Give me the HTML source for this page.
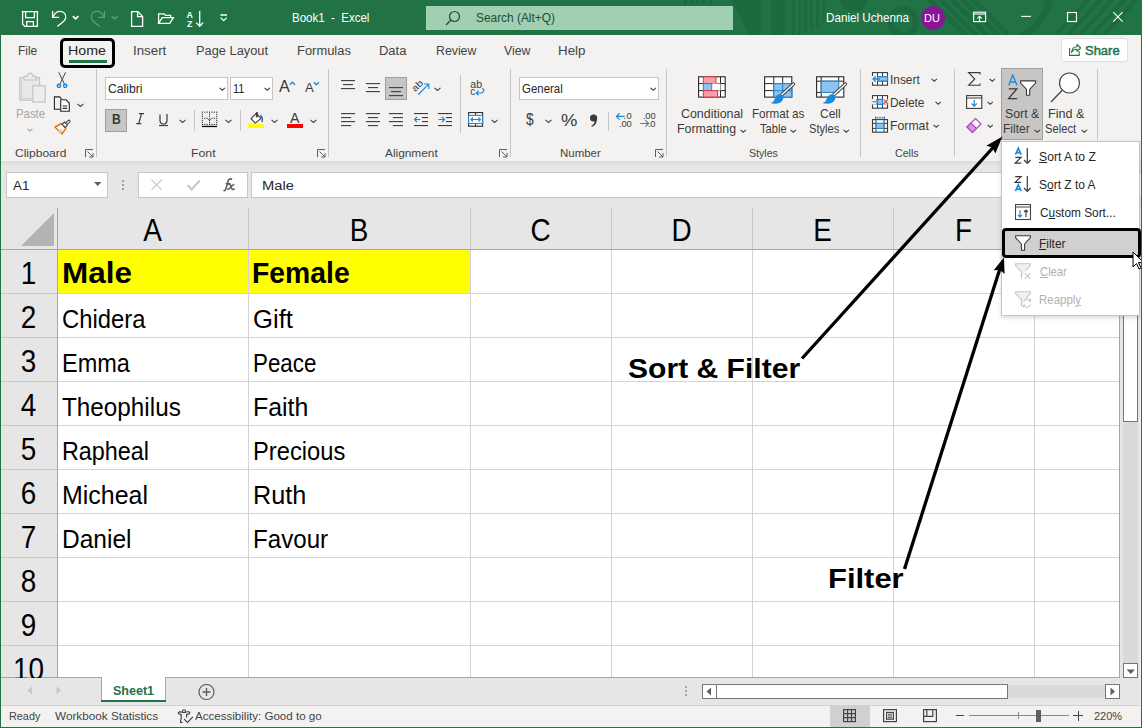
<!DOCTYPE html><html><head><meta charset="utf-8"><style>
*{box-sizing:border-box;margin:0;padding:0}
html,body{width:1142px;height:728px;overflow:hidden;background:#f3f2f1;font-family:"Liberation Sans",sans-serif;position:relative;color:#262626}
.a{position:absolute}
.t{position:absolute;white-space:nowrap;line-height:1}
.hl{position:absolute;height:1px}
.vl{position:absolute;width:1px}
</style></head><body>
<div class="a" style="left:0px;top:0px;width:1142px;height:35px;background:#217346"></div>
<div class="a" style="left:0px;top:35px;width:1142px;height:127px;background:#f3f2f1"></div>
<div class="a" style="left:0px;top:161px;width:1142px;height:5px;background:linear-gradient(#dcdbda,#e6e6e6)"></div>
<div class="a" style="left:0px;top:165px;width:1142px;height:43px;background:#e6e6e6"></div>
<div class="a" style="left:58px;top:250px;width:1061px;height:427px;background:#fff"></div>
<div class="a" style="left:0px;top:208px;width:1119px;height:41px;background:#e6e6e6"></div>
<div class="a" style="left:0px;top:250px;width:57px;height:427px;background:#e6e6e6"></div>
<div class="a" style="left:58px;top:250px;width:412px;height:43px;background:#ffff00"></div>
<div class="a" style="left:58px;top:293px;width:1061px;height:1px;background:#d4d4d4"></div>
<div class="a" style="left:0px;top:293px;width:57px;height:1px;background:#c8c8c8"></div>
<div class="a" style="left:58px;top:337px;width:1061px;height:1px;background:#d4d4d4"></div>
<div class="a" style="left:0px;top:337px;width:57px;height:1px;background:#c8c8c8"></div>
<div class="a" style="left:58px;top:381px;width:1061px;height:1px;background:#d4d4d4"></div>
<div class="a" style="left:0px;top:381px;width:57px;height:1px;background:#c8c8c8"></div>
<div class="a" style="left:58px;top:425px;width:1061px;height:1px;background:#d4d4d4"></div>
<div class="a" style="left:0px;top:425px;width:57px;height:1px;background:#c8c8c8"></div>
<div class="a" style="left:58px;top:469px;width:1061px;height:1px;background:#d4d4d4"></div>
<div class="a" style="left:0px;top:469px;width:57px;height:1px;background:#c8c8c8"></div>
<div class="a" style="left:58px;top:513px;width:1061px;height:1px;background:#d4d4d4"></div>
<div class="a" style="left:0px;top:513px;width:57px;height:1px;background:#c8c8c8"></div>
<div class="a" style="left:58px;top:557px;width:1061px;height:1px;background:#d4d4d4"></div>
<div class="a" style="left:0px;top:557px;width:57px;height:1px;background:#c8c8c8"></div>
<div class="a" style="left:58px;top:601px;width:1061px;height:1px;background:#d4d4d4"></div>
<div class="a" style="left:0px;top:601px;width:57px;height:1px;background:#c8c8c8"></div>
<div class="a" style="left:58px;top:645px;width:1061px;height:1px;background:#d4d4d4"></div>
<div class="a" style="left:0px;top:645px;width:57px;height:1px;background:#c8c8c8"></div>
<div class="a" style="left:248px;top:250px;width:1px;height:427px;background:#d4d4d4"></div>
<div class="a" style="left:248px;top:208px;width:1px;height:41px;background:#c8c8c8"></div>
<div class="a" style="left:470px;top:250px;width:1px;height:427px;background:#d4d4d4"></div>
<div class="a" style="left:470px;top:208px;width:1px;height:41px;background:#c8c8c8"></div>
<div class="a" style="left:611px;top:250px;width:1px;height:427px;background:#d4d4d4"></div>
<div class="a" style="left:611px;top:208px;width:1px;height:41px;background:#c8c8c8"></div>
<div class="a" style="left:752px;top:250px;width:1px;height:427px;background:#d4d4d4"></div>
<div class="a" style="left:752px;top:208px;width:1px;height:41px;background:#c8c8c8"></div>
<div class="a" style="left:893px;top:250px;width:1px;height:427px;background:#d4d4d4"></div>
<div class="a" style="left:893px;top:208px;width:1px;height:41px;background:#c8c8c8"></div>
<div class="a" style="left:1034px;top:250px;width:1px;height:427px;background:#d4d4d4"></div>
<div class="a" style="left:1034px;top:208px;width:1px;height:41px;background:#c8c8c8"></div>
<div class="a" style="left:0px;top:249px;width:1119px;height:1px;background:#a6a6a6"></div>
<div class="a" style="left:57px;top:208px;width:1px;height:469px;background:#a6a6a6"></div>
<svg class="a" style="left:0;top:208px" width="57" height="41"><polygon points="21,38 54,38 54,5" fill="#b4b4b4"/></svg>
<div class="a" style="left:1119px;top:208px;width:1px;height:470px;background:#a6a6a6"></div>
<div class="a" style="left:0px;top:677px;width:1120px;height:1px;background:#a6a6a6"></div>
<div class="t" style="left:57px;top:215px;width:191px;text-align:center;font-size:31px;color:#000;transform:scaleX(0.9)">A</div>
<div class="t" style="left:248px;top:215px;width:222px;text-align:center;font-size:31px;color:#000;transform:scaleX(0.9)">B</div>
<div class="t" style="left:470px;top:215px;width:141px;text-align:center;font-size:31px;color:#000;transform:scaleX(0.9)">C</div>
<div class="t" style="left:611px;top:215px;width:141px;text-align:center;font-size:31px;color:#000;transform:scaleX(0.9)">D</div>
<div class="t" style="left:752px;top:215px;width:141px;text-align:center;font-size:31px;color:#000;transform:scaleX(0.9)">E</div>
<div class="t" style="left:893px;top:215px;width:141px;text-align:center;font-size:31px;color:#000;transform:scaleX(0.9)">F</div>
<div class="t" style="left:1034px;top:215px;width:85px;text-align:center;font-size:31px;color:#000;transform:scaleX(0.9)">G</div>
<div class="t" style="left:0;top:258px;width:57px;text-align:center;font-size:31px;color:#000;transform:scaleX(0.9)">1</div>
<div class="t" style="left:0;top:302px;width:57px;text-align:center;font-size:31px;color:#000;transform:scaleX(0.9)">2</div>
<div class="t" style="left:0;top:346px;width:57px;text-align:center;font-size:31px;color:#000;transform:scaleX(0.9)">3</div>
<div class="t" style="left:0;top:390px;width:57px;text-align:center;font-size:31px;color:#000;transform:scaleX(0.9)">4</div>
<div class="t" style="left:0;top:434px;width:57px;text-align:center;font-size:31px;color:#000;transform:scaleX(0.9)">5</div>
<div class="t" style="left:0;top:478px;width:57px;text-align:center;font-size:31px;color:#000;transform:scaleX(0.9)">6</div>
<div class="t" style="left:0;top:522px;width:57px;text-align:center;font-size:31px;color:#000;transform:scaleX(0.9)">7</div>
<div class="t" style="left:0;top:566px;width:57px;text-align:center;font-size:31px;color:#000;transform:scaleX(0.9)">8</div>
<div class="t" style="left:0;top:610px;width:57px;text-align:center;font-size:31px;color:#000;transform:scaleX(0.9)">9</div>
<div class="t" style="left:0;top:654px;width:57px;text-align:center;font-size:31px;color:#000;transform:scaleX(0.9)">10</div>
<div class="t" style="left:62px;top:259px;font-size:29px;font-weight:bold;color:#000;transform:scaleX(1.085);transform-origin:0 0;">Male</div>
<div class="t" style="left:252px;top:259px;font-size:29px;font-weight:bold;color:#000;transform:scaleX(0.977);transform-origin:0 0;">Female</div>
<div class="t" style="left:62px;top:306px;font-size:26px;color:#000;transform:scaleX(0.916);transform-origin:0 0;">Chidera</div>
<div class="t" style="left:253px;top:306px;font-size:26px;color:#000;transform:scaleX(0.987);transform-origin:0 0;">Gift</div>
<div class="t" style="left:62px;top:350px;font-size:26px;color:#000;transform:scaleX(0.904);transform-origin:0 0;">Emma</div>
<div class="t" style="left:253px;top:350px;font-size:26px;color:#000;transform:scaleX(0.859);transform-origin:0 0;">Peace</div>
<div class="t" style="left:62px;top:394px;font-size:26px;color:#000;transform:scaleX(0.934);transform-origin:0 0;">Theophilus</div>
<div class="t" style="left:253px;top:394px;font-size:26px;color:#000;transform:scaleX(0.956);transform-origin:0 0;">Faith</div>
<div class="t" style="left:62px;top:438px;font-size:26px;color:#000;transform:scaleX(0.898);transform-origin:0 0;">Rapheal</div>
<div class="t" style="left:253px;top:438px;font-size:26px;color:#000;transform:scaleX(0.912);transform-origin:0 0;">Precious</div>
<div class="t" style="left:62px;top:482px;font-size:26px;color:#000;transform:scaleX(0.96);transform-origin:0 0;">Micheal</div>
<div class="t" style="left:253px;top:482px;font-size:26px;color:#000;transform:scaleX(0.971);transform-origin:0 0;">Ruth</div>
<div class="t" style="left:62px;top:526px;font-size:26px;color:#000;transform:scaleX(0.943);transform-origin:0 0;">Daniel</div>
<div class="t" style="left:253px;top:526px;font-size:26px;color:#000;transform:scaleX(0.928);transform-origin:0 0;">Favour</div>
<svg class="a" style="left:0px;top:0px;" width="1142" height="35" viewBox="0 0 1142 35"><g fill="#1e6a40">
<rect x="684" y="0" width="3" height="5"/><rect x="690" y="0" width="3" height="5"/><rect x="696" y="0" width="3" height="5"/><rect x="702" y="0" width="3" height="5"/><rect x="709" y="0" width="3" height="5"/>
<path d="M731,0 H749 V35 H761 V35 H749 Z"/>
<rect x="749" y="0" width="12" height="35"/>
<rect x="771" y="0" width="14" height="35"/>
<rect x="792" y="0" width="3" height="35"/><rect x="798" y="0" width="3" height="35"/><rect x="804" y="0" width="3" height="33"/><rect x="810" y="0" width="3" height="30"/><rect x="816" y="0" width="3" height="26"/><rect x="822" y="0" width="3" height="22"/>
<path d="M840,0 A13.5,12 0 0 0 867,0 Z"/>
</g>
<g fill="none" stroke="#1e6a40">
<circle cx="903" cy="22" r="13" stroke-width="6"/>
<path d="M928,-2 L968,38 M939,-2 L979,38 M950,-2 L990,38 M961,-2 L1001,38 M972,-2 L1008,34" stroke-width="5"/>
<path d="M1050,-5 C1048,15 1035,30 1015,40" stroke-width="7"/>
<path d="M1090,-2 L1055,36 M1102,-2 L1067,36 M1114,-2 L1079,36 M1126,-2 L1091,36 M1138,-2 L1103,36" stroke-width="4"/>
</g></svg>
<svg class="a" style="left:0px;top:0px;" width="240" height="35" viewBox="0 0 240 35"><g fill="none" stroke="#fff" stroke-width="1.3">
<path d="M22.6,11.6 H37.4 V26.3 H24.8 L22.6,24.1 Z"/>
<path d="M25.6,11.6 V17.6 H34.4 V11.6"/>
<path d="M26.7,26.3 V21.6 H33.4 V26.3"/>
<path d="M52.6,11 V17.4 H59"/>
<path d="M53.2,16.8 C55,12.5 58,11.2 60.5,11.4 C64,11.8 66,14.5 65.7,17.6 C65.5,19.5 64.5,20.5 63.5,21.5 L57.3,26.6"/>
<path d="M72.8,16.2 L75.6,18.8 L78.4,16.2" stroke-width="1.7"/>
<path d="M131.6,11.6 H137.8 L142.6,16.4 V26.4 H131.6 Z"/>
<path d="M137.6,11.6 V16.6 H142.6"/>
<path d="M158.6,23.4 V13.8 H164 L165.6,15.4 H170.6 V17.4"/>
<path d="M158.6,23.4 L162.2,17.6 H173.4 L169.8,23.4 Z"/>
<path d="M199.7,11 V26.3 M196.2,22.6 L199.7,26.3 L203.2,22.6"/>
<path d="M220.4,15 H227 M220.6,17.6 L223.7,20.6 L226.8,17.6"/>
</g>
<g fill="none" stroke="#5e9f79" stroke-width="1.3">
<path d="M104.4,11 V17.4 H98"/>
<path d="M103.8,16.8 C102,12.5 99,11.2 96.5,11.4 C93,11.8 91,14.5 91.3,17.6 C91.5,19.5 92.5,20.5 93.5,21.5 L99.7,26.6"/>
<path d="M111.8,16.2 L114.6,18.8 L117.4,16.2" stroke-width="1.5"/>
</g>
<g fill="#fff" font-family="Liberation Sans" font-weight="bold" font-size="8.8">
<text x="186.6" y="17.6">A</text><text x="187" y="26.8">Z</text></g></svg>
<div class="t" style="left:291.78px;top:11.84px;font-size:12px;color:#fff;transform:scaleX(0.9587);transform-origin:0 0;">Book1&nbsp; -&nbsp; Excel</div>
<div class="a" style="left:426px;top:6px;width:307px;height:24px;background:#a0cfb2"></div>
<svg class="a" style="left:445px;top:10px;" width="16" height="16" viewBox="0 0 16 16"><g fill="none" stroke="#1a4d31" stroke-width="1.2"><circle cx="9.5" cy="6.5" r="5"/><path d="M6,10 l-5,5"/></g></svg>
<div class="t" style="left:475.76px;top:11.84px;font-size:12px;color:#1a4d31;transform:scaleX(0.9908);transform-origin:0 0;">Search (Alt+Q)</div>
<div class="t" style="left:826.47px;top:12.34px;font-size:12px;color:#fff;transform:scaleX(0.9713);transform-origin:0 0;">Daniel Uchenna</div>
<div class="a" style="left:921px;top:6px;width:24px;height:24px;border-radius:50%;background:#881798"></div>
<div class="t" style="left:924px;top:13.19px;font-size:11px;color:#fff;">DU</div>
<svg class="a" style="left:0px;top:0px;" width="1142" height="35" viewBox="0 0 1142 35"><g fill="none" stroke="#fff" stroke-width="1.1"><rect x="973.6" y="12.2" width="12" height="9.4"/><path d="M973.6,14 H985.6"/><path d="M979.6,21 V16.4 M977.4,18.4 L979.6,16.2 L981.8,18.4"/></g><path d="M1021.2,16.4 H1031" stroke="#fff" stroke-width="1.1"/><rect x="1067.5" y="12.5" width="9" height="9" fill="none" stroke="#fff" stroke-width="1.1"/><path d="M1113.2,12.2 L1122.6,21.6 M1122.6,12.2 L1113.2,21.6" stroke="#fff" stroke-width="1.1"/></svg>
<div class="t" style="left:17.65px;top:44.59px;font-size:12.3px;color:#444;transform:scaleX(0.969);transform-origin:0 0;">File</div>
<div class="t" style="left:68.36px;top:44.59px;font-size:12.3px;color:#262626;transform:scaleX(1.1555);transform-origin:0 0;">Home</div>
<div class="t" style="left:132.8px;top:44.59px;font-size:12.3px;color:#444;transform:scaleX(1.0818);transform-origin:0 0;">Insert</div>
<div class="t" style="left:195.97px;top:44.59px;font-size:12.3px;color:#444;transform:scaleX(1.0424);transform-origin:0 0;">Page Layout</div>
<div class="t" style="left:297.07px;top:44.59px;font-size:12.3px;color:#444;transform:scaleX(1.0506);transform-origin:0 0;">Formulas</div>
<div class="t" style="left:379.36px;top:44.59px;font-size:12.3px;color:#444;transform:scaleX(1.0533);transform-origin:0 0;">Data</div>
<div class="t" style="left:435.62px;top:44.59px;font-size:12.3px;color:#444;transform:scaleX(1.001);transform-origin:0 0;">Review</div>
<div class="t" style="left:504.34px;top:44.59px;font-size:12.3px;color:#444;transform:scaleX(1.0006);transform-origin:0 0;">View</div>
<div class="t" style="left:558.43px;top:44.59px;font-size:12.3px;color:#444;transform:scaleX(1.084);transform-origin:0 0;">Help</div>
<div class="a" style="left:69px;top:60px;width:38px;height:3px;background:#217346"></div>
<div class="a" style="left:60px;top:38px;width:55px;height:30px;border:3px solid #000;border-radius:5px"></div>
<div class="a" style="left:1061px;top:38px;width:67px;height:24px;border:1px solid #e1dfdd;background:#fff;border-radius:3px"></div>
<svg class="a" style="left:0px;top:0px;" width="1142" height="70" viewBox="0 0 1142 70"><g fill="none" stroke="#217346" stroke-width="1.1"><path d="M1069.6,48 V55.4 H1079.2 V51.2"/><path d="M1071.6,52.4 C1072,48.6 1074,46.9 1077,46.8 V44.3 L1080.6,48 L1077,51.3 V49.2 C1074.6,49.1 1072.6,50.3 1071.6,52.4 Z" stroke-linejoin="round"/></g></svg>
<div class="t" style="left:1084.72px;top:44.72px;font-size:12.5px;color:#217346;-webkit-text-stroke:0.45px #217346;transform:scaleX(1.0377);transform-origin:0 0;">Share</div>
<div class="t" style="left:14.9px;top:147.69px;font-size:11px;color:#444;transform:scaleX(1.0935);transform-origin:0 0;">Clipboard</div>
<div class="t" style="left:191.32px;top:147.69px;font-size:11px;color:#444;transform:scaleX(1.1156);transform-origin:0 0;">Font</div>
<div class="t" style="left:385.0px;top:147.69px;font-size:11px;color:#444;transform:scaleX(1.077);transform-origin:0 0;">Alignment</div>
<div class="t" style="left:559.78px;top:147.69px;font-size:11px;color:#444;transform:scaleX(1.0431);transform-origin:0 0;">Number</div>
<div class="t" style="left:748.82px;top:147.69px;font-size:11px;color:#444;transform:scaleX(0.9624);transform-origin:0 0;">Styles</div>
<div class="t" style="left:895.17px;top:147.69px;font-size:11px;color:#444;transform:scaleX(0.9643);transform-origin:0 0;">Cells</div>
<svg class="a" style="left:85px;top:149px;" width="9" height="9" viewBox="0 0 9 9"><g fill="none" stroke="#605e5c" stroke-width="1"><path d="M0.5,8 v-7.5 h7.5"/><path d="M2.5,2.5 l5.5,5.5 M4,8 h4 v-4"/></g></svg>
<svg class="a" style="left:317px;top:149px;" width="9" height="9" viewBox="0 0 9 9"><g fill="none" stroke="#605e5c" stroke-width="1"><path d="M0.5,8 v-7.5 h7.5"/><path d="M2.5,2.5 l5.5,5.5 M4,8 h4 v-4"/></g></svg>
<svg class="a" style="left:499px;top:149px;" width="9" height="9" viewBox="0 0 9 9"><g fill="none" stroke="#605e5c" stroke-width="1"><path d="M0.5,8 v-7.5 h7.5"/><path d="M2.5,2.5 l5.5,5.5 M4,8 h4 v-4"/></g></svg>
<svg class="a" style="left:655px;top:149px;" width="9" height="9" viewBox="0 0 9 9"><g fill="none" stroke="#605e5c" stroke-width="1"><path d="M0.5,8 v-7.5 h7.5"/><path d="M2.5,2.5 l5.5,5.5 M4,8 h4 v-4"/></g></svg>
<div class="a" style="left:96px;top:69px;width:1px;height:88px;background:#c8c6c4"></div>
<div class="a" style="left:328px;top:69px;width:1px;height:88px;background:#c8c6c4"></div>
<div class="a" style="left:510px;top:69px;width:1px;height:88px;background:#c8c6c4"></div>
<div class="a" style="left:666px;top:69px;width:1px;height:88px;background:#c8c6c4"></div>
<div class="a" style="left:860px;top:69px;width:1px;height:88px;background:#c8c6c4"></div>
<div class="a" style="left:954px;top:69px;width:1px;height:88px;background:#c8c6c4"></div>
<div class="a" style="left:1097px;top:69px;width:1px;height:71px;background:#c8c6c4"></div>
<svg class="a" style="left:0px;top:0px;" width="100" height="140" viewBox="0 0 100 140"><g stroke="#c4c4c4" stroke-width="1.2">
<path d="M23.8,77.6 H19.8 V100.2 H39.6 V77.6 H36.4" fill="#e8e8e8"/>
<path d="M21.6,79.6 V98.4 H37.8" fill="none" stroke="#d4d4d4"/>
<path d="M24,80 V76.4 H27.2 C27.6,74 28.6,73.2 30.1,73.2 C31.6,73.2 32.6,74 33,76.4 H36.2 V80 Z" fill="#ececec"/>
<rect x="32.8" y="85.8" width="12.4" height="16.3" fill="#ededed"/>
</g></svg>
<div class="t" style="left:15.59px;top:107.67px;font-size:12.2px;color:#a6a6a6;transform:scaleX(0.9344);transform-origin:0 0;">Paste</div>
<svg class="a" style="left:27px;top:128px;" width="6" height="5" viewBox="0 0 6 5"><path d="M0.5,0.8 l2.5,2.2 l2.5,-2.2" fill="none" stroke="#a6a6a6" stroke-width="1.1"/></svg>
<svg class="a" style="left:0px;top:0px;" width="100" height="140" viewBox="0 0 100 140"><g fill="none" stroke="#444" stroke-width="1">
<path d="M58.8,72.3 L64.4,84 M65.6,72.3 L60,84"/></g>
<g fill="none" stroke="#1e88d8" stroke-width="1.5"><circle cx="58.9" cy="85.8" r="1.6"/><circle cx="65.2" cy="85.8" r="1.6"/></g>
<g stroke="#262626" stroke-width="1.1" fill="#fff">
<path d="M61,109.3 H54.4 V96.9 H59.6 L61.5,98.8" fill="none"/>
<path d="M60.7,99.8 H66 L69.3,103.1 V111.2 H60.7 Z"/>
<path d="M62.6,106 H67.2 M62.6,108.4 H67.2" fill="none"/>
</g>
<path d="M55,127 L61.5,123.5 L66,128 L62,134 Z" fill="#fff" stroke="#e07a10" stroke-width="1.5" stroke-linejoin="round"/>
<path d="M58,130.5 L61,128.8 L62.5,131.5 L60.5,133.5 Z" fill="#f3c488"/>
<path d="M62,124.5 L64.5,122 L67.5,125 L65,127.5 Z M65.5,123 L68.5,120.2 A1.2,1.2 0 0 1 70,121.8 L67,124.6" fill="#fff" stroke="#444" stroke-width="1.1"/>
</svg>
<svg class="a" style="left:76.5px;top:103px;" width="7" height="5" viewBox="0 0 7 5"><path d="M0.5,0.8 l3.0,2.7 l3.0,-2.7" fill="none" stroke="#444" stroke-width="1.1"/></svg>
<div class="a" style="left:105px;top:77px;width:123px;height:23px;background:#fff;border:1px solid #c8c6c4"></div>
<div class="t" style="left:108.09px;top:82.97px;font-size:12.2px;color:#262626;transform:scaleX(0.9963);transform-origin:0 0;">Calibri</div>
<svg class="a" style="left:219px;top:87px;" width="6.5" height="5" viewBox="0 0 6.5 5"><path d="M0.5,0.8 l2.75,2.45 l2.75,-2.45" fill="none" stroke="#444" stroke-width="1.1"/></svg>
<div class="a" style="left:230px;top:77px;width:43px;height:23px;background:#fff;border:1px solid #c8c6c4"></div>
<div class="t" style="left:232.88px;top:82.97px;font-size:12.2px;color:#262626;transform:scaleX(0.8958);transform-origin:0 0;">11</div>
<svg class="a" style="left:264px;top:87px;" width="6.5" height="5" viewBox="0 0 6.5 5"><path d="M0.5,0.8 l2.75,2.45 l2.75,-2.45" fill="none" stroke="#444" stroke-width="1.1"/></svg>
<div class="t" style="left:279.0px;top:78.41px;font-size:17px;color:#3b3a39;transform:scaleX(0.9553);transform-origin:0 0;">A</div>
<svg class="a" style="left:288.5px;top:80.5px;" width="7" height="5" viewBox="0 0 7 5"><path d="M0.8,3.8 l2.6,-2.6 l2.6,2.6" fill="none" stroke="#1e88d8" stroke-width="1.3"/></svg>
<div class="t" style="left:304.6px;top:81.37px;font-size:13.5px;color:#3b3a39;transform:scaleX(0.9691);transform-origin:0 0;">A</div>
<svg class="a" style="left:312.5px;top:80.5px;" width="7" height="5" viewBox="0 0 7 5"><path d="M0.8,1.2 l2.6,2.6 l2.6,-2.6" fill="none" stroke="#1e88d8" stroke-width="1.3"/></svg>
<div class="a" style="left:105px;top:109px;width:22px;height:23px;background:#c8c6c4;border:1px solid #a19f9d"></div>
<div class="t" style="left:111.91px;top:112.35px;font-size:14px;color:#3b3a39;font-weight:bold;transform:scaleX(0.8665);transform-origin:0 0;">B</div>
<svg class="a" style="left:136px;top:113px;" width="8" height="12" viewBox="0 0 8 12"><path d="M3,0.7 h5 M0.3,10.6 h5 M5.5,0.7 L2.8,10.6" fill="none" stroke="#3b3a39" stroke-width="1.2"/></svg>
<svg class="a" style="left:159px;top:114px;" width="9" height="13" viewBox="0 0 9 13"><path d="M1,0.5 v6 a3.5,3.5 0 0 0 7,0 v-6.5" fill="none" stroke="#3b3a39" stroke-width="1.2"/><rect x="0" y="10.9" width="9" height="1.2" fill="#3b3a39"/></svg>
<svg class="a" style="left:178.5px;top:119px;" width="7" height="5" viewBox="0 0 7 5"><path d="M0.5,0.8 l3.0,2.7 l3.0,-2.7" fill="none" stroke="#444" stroke-width="1.1"/></svg>
<div class="a" style="left:194px;top:110px;width:1px;height:21px;background:#c8c6c4"></div>
<svg class="a" style="left:0px;top:0px;" width="300" height="140" viewBox="0 0 300 140"><g fill="#262626"><rect x="201.80" y="111.60" width="1.1" height="1.1"/><rect x="201.80" y="113.65" width="1.1" height="1.1"/><rect x="201.80" y="115.70" width="1.1" height="1.1"/><rect x="201.80" y="117.75" width="1.1" height="1.1"/><rect x="201.80" y="119.80" width="1.1" height="1.1"/><rect x="201.80" y="121.85" width="1.1" height="1.1"/><rect x="201.80" y="123.90" width="1.1" height="1.1"/><rect x="204.20" y="111.60" width="1.1" height="1.1"/><rect x="204.20" y="117.75" width="1.1" height="1.1"/><rect x="204.20" y="123.90" width="1.1" height="1.1"/><rect x="206.60" y="111.60" width="1.1" height="1.1"/><rect x="206.60" y="117.75" width="1.1" height="1.1"/><rect x="206.60" y="123.90" width="1.1" height="1.1"/><rect x="209.00" y="111.60" width="1.1" height="1.1"/><rect x="209.00" y="113.65" width="1.1" height="1.1"/><rect x="209.00" y="115.70" width="1.1" height="1.1"/><rect x="209.00" y="119.80" width="1.1" height="1.1"/><rect x="209.00" y="121.85" width="1.1" height="1.1"/><rect x="209.00" y="123.90" width="1.1" height="1.1"/><rect x="211.40" y="111.60" width="1.1" height="1.1"/><rect x="211.40" y="117.75" width="1.1" height="1.1"/><rect x="211.40" y="123.90" width="1.1" height="1.1"/><rect x="213.80" y="111.60" width="1.1" height="1.1"/><rect x="213.80" y="117.75" width="1.1" height="1.1"/><rect x="213.80" y="123.90" width="1.1" height="1.1"/><rect x="216.20" y="111.60" width="1.1" height="1.1"/><rect x="216.20" y="113.65" width="1.1" height="1.1"/><rect x="216.20" y="115.70" width="1.1" height="1.1"/><rect x="216.20" y="117.75" width="1.1" height="1.1"/><rect x="216.20" y="119.80" width="1.1" height="1.1"/><rect x="216.20" y="121.85" width="1.1" height="1.1"/><rect x="216.20" y="123.90" width="1.1" height="1.1"/></g><path d="M209.5,118.3 L210.4,119.2 L209.5,120.1 L208.6,119.2 Z" fill="none" stroke="#262626" stroke-width="0.8"/><rect x="202" y="125.8" width="15" height="1.3" fill="#000"/></svg>
<svg class="a" style="left:224.5px;top:119px;" width="7" height="5" viewBox="0 0 7 5"><path d="M0.5,0.8 l3.0,2.7 l3.0,-2.7" fill="none" stroke="#444" stroke-width="1.1"/></svg>
<div class="a" style="left:240px;top:110px;width:1px;height:21px;background:#c8c6c4"></div>
<svg class="a" style="left:0px;top:0px;" width="300" height="140" viewBox="0 0 300 140"><path d="M251,118.6 L256.2,113.4 L261,118.3 L255.3,123.2 Z" fill="#fff" stroke="#3b3a39" stroke-width="1.1" stroke-linejoin="round"/><path d="M256.4,117.3 V113.2 C256.4,111.6 257.6,111.6 257.6,113.2 V117.3" fill="none" stroke="#3b3a39" stroke-width="1"/><path d="M260.4,115.5 C262,116.5 262.6,119 262.2,122" fill="none" stroke="#1e6fb8" stroke-width="1.5"/><rect x="248" y="124" width="16" height="4" fill="#ffff00"/></svg>
<svg class="a" style="left:270.5px;top:119px;" width="7" height="5" viewBox="0 0 7 5"><path d="M0.5,0.8 l3.0,2.7 l3.0,-2.7" fill="none" stroke="#444" stroke-width="1.1"/></svg>
<div class="t" style="left:290.4px;top:110.53px;font-size:14.5px;color:#3b3a39;transform:scaleX(0.9749);transform-origin:0 0;">A</div>
<div class="a" style="left:287px;top:124px;width:16px;height:4px;background:#ff0000"></div>
<svg class="a" style="left:309.5px;top:119px;" width="7" height="5" viewBox="0 0 7 5"><path d="M0.5,0.8 l3.0,2.7 l3.0,-2.7" fill="none" stroke="#444" stroke-width="1.1"/></svg>
<svg class="a" style="left:340px;top:79px;" width="18" height="18" viewBox="0 0 18 18"><rect x="1" y="1" width="14" height="1.15" fill="#444"/><rect x="3" y="5" width="10" height="1.15" fill="#444"/><rect x="1" y="9" width="14" height="1.15" fill="#444"/></svg>
<svg class="a" style="left:365px;top:82px;" width="18" height="18" viewBox="0 0 18 18"><rect x="1" y="1" width="14" height="1.15" fill="#444"/><rect x="3" y="5" width="10" height="1.15" fill="#444"/><rect x="1" y="9" width="14" height="1.15" fill="#444"/></svg>
<div class="a" style="left:385px;top:77px;width:22px;height:23px;background:#c8c6c4;border:1px solid #a19f9d"></div>
<svg class="a" style="left:388px;top:86px;" width="18" height="18" viewBox="0 0 18 18"><rect x="1" y="1" width="14" height="1.15" fill="#444"/><rect x="3" y="5" width="10" height="1.15" fill="#444"/><rect x="1" y="9" width="14" height="1.15" fill="#444"/></svg>
<svg class="a" style="left:0px;top:0px;" width="500" height="140" viewBox="0 0 500 140"><g fill="#3b3a39" font-family="Liberation Sans" font-size="9.5"><text x="415.2" y="92.2" transform="rotate(-45 415.2 92.2)" textLength="12" lengthAdjust="spacingAndGlyphs">ab</text></g><path d="M418.3,94.5 L428.5,84.3 M423.8,84 H428.8 V89" fill="none" stroke="#1e88d8" stroke-width="1.2"/></svg>
<svg class="a" style="left:433.5px;top:86.5px;" width="7" height="5" viewBox="0 0 7 5"><path d="M0.5,0.8 l3.0,2.7 l3.0,-2.7" fill="none" stroke="#444" stroke-width="1.1"/></svg>
<svg class="a" style="left:0px;top:0px;" width="500" height="140" viewBox="0 0 500 140"><g fill="#3b3a39" font-family="Liberation Sans" font-size="10"><text x="470.3" y="87.8" textLength="11.8" lengthAdjust="spacingAndGlyphs">ab</text><text x="470.3" y="94.6">c</text></g><path d="M482.2,88.2 C484.8,89.5 484.2,93 480,93 H476.5 M478.6,90.8 L476.3,93 L478.6,95.2" fill="none" stroke="#1e88d8" stroke-width="1.2"/></svg>
<svg class="a" style="left:340px;top:112px;" width="18" height="18" viewBox="0 0 18 18"><rect x="1" y="1" width="14" height="1.15" fill="#444"/><rect x="1" y="5" width="10" height="1.15" fill="#444"/><rect x="1" y="9" width="14" height="1.15" fill="#444"/><rect x="1" y="13" width="10" height="1.15" fill="#444"/></svg>
<svg class="a" style="left:365px;top:112px;" width="18" height="18" viewBox="0 0 18 18"><rect x="1" y="1" width="14" height="1.15" fill="#444"/><rect x="3" y="5" width="10" height="1.15" fill="#444"/><rect x="1" y="9" width="14" height="1.15" fill="#444"/><rect x="3" y="13" width="10" height="1.15" fill="#444"/></svg>
<svg class="a" style="left:388px;top:112px;" width="18" height="18" viewBox="0 0 18 18"><rect x="1" y="1" width="14" height="1.15" fill="#444"/><rect x="5" y="5" width="10" height="1.15" fill="#444"/><rect x="1" y="9" width="14" height="1.15" fill="#444"/><rect x="5" y="13" width="10" height="1.15" fill="#444"/></svg>
<svg class="a" style="left:0px;top:0px;" width="500" height="140" viewBox="0 0 500 140"><g fill="#3b3a39"><rect x="414" y="113" width="14" height="1.1"/><rect x="422" y="117" width="6" height="1.1"/><rect x="422" y="121" width="6" height="1.1"/><rect x="414" y="125" width="14" height="1.1"/><rect x="438" y="113" width="14" height="1.1"/><rect x="446" y="117" width="6" height="1.1"/><rect x="446" y="121" width="6" height="1.1"/><rect x="438" y="125" width="14" height="1.1"/></g><path d="M420.5,119.5 H414.5 M417,117 L414.5,119.5 L417,122 M438.5,119.5 H444.5 M442,117 L444.5,119.5 L442,122" fill="none" stroke="#1e88d8" stroke-width="1.2"/></svg>
<div class="a" style="left:460px;top:75px;width:1px;height:58px;background:#c8c6c4"></div>
<svg class="a" style="left:0px;top:0px;" width="500" height="140" viewBox="0 0 500 140"><rect x="468.6" y="112.6" width="14" height="13.6" fill="#fff" stroke="#262626" stroke-width="1.1"/><path d="M475.6,112.6 V115.3 M475.6,123.6 V126.2" stroke="#262626" stroke-width="1"/><rect x="468.6" y="115.4" width="14" height="8.1" fill="#fff" stroke="#1e88d8" stroke-width="1.1"/><path d="M471,119.5 H480.5 M473,117.5 L471,119.5 L473,121.5 M478.5,117.5 L480.5,119.5 L478.5,121.5" fill="none" stroke="#1e88d8" stroke-width="1.1"/></svg>
<svg class="a" style="left:490.5px;top:118.5px;" width="7" height="5" viewBox="0 0 7 5"><path d="M0.5,0.8 l3.0,2.7 l3.0,-2.7" fill="none" stroke="#444" stroke-width="1.1"/></svg>
<div class="a" style="left:519px;top:77px;width:140px;height:23px;background:#fff;border:1px solid #c8c6c4"></div>
<div class="t" style="left:521.93px;top:82.77px;font-size:12.2px;color:#262626;transform:scaleX(0.9388);transform-origin:0 0;">General</div>
<svg class="a" style="left:649.5px;top:87px;" width="6.5" height="5" viewBox="0 0 6.5 5"><path d="M0.5,0.8 l2.75,2.45 l2.75,-2.45" fill="none" stroke="#444" stroke-width="1.1"/></svg>
<div class="t" style="left:525.56px;top:111.76px;font-size:16px;color:#3b3a39;transform:scaleX(0.8608);transform-origin:0 0;">$</div>
<svg class="a" style="left:544.5px;top:118.5px;" width="7" height="5" viewBox="0 0 7 5"><path d="M0.5,0.8 l3.0,2.7 l3.0,-2.7" fill="none" stroke="#444" stroke-width="1.1"/></svg>
<div class="t" style="left:560.76px;top:112.86px;font-size:16px;color:#3b3a39;transform:scaleX(1.1509);transform-origin:0 0;">%</div>
<svg class="a" style="left:589px;top:113px;" width="10" height="15" viewBox="0 0 10 15"><circle cx="4.6" cy="5" r="3.6" fill="#3b3a39"/><path d="M7.6,5.5 C8.4,9 6.5,12.5 2.8,13.8 L2.3,12.8 C4.8,11.5 5.8,9.5 5.6,7.5 z" fill="#3b3a39"/></svg>
<div class="a" style="left:608px;top:112px;width:1px;height:19px;background:#c8c6c4"></div>
<svg class="a" style="left:0px;top:0px;" width="700" height="140" viewBox="0 0 700 140"><g fill="#3b3a39" font-family="Liberation Sans" font-size="9.4">
<text x="626.5" y="119">0</text><text x="619" y="126.9">.</text><text x="621.4" y="126.9">00</text><text x="623.6" y="119">.</text>
<text x="643" y="119">.</text><text x="645.3" y="119">00</text><text x="650.3" y="126.9">0</text><text x="648" y="126.9">.</text></g>
<path d="M624.8,116.4 H616.5 M619.6,113.3 L616.4,116.4 L619.6,119.6 M640.2,123.5 H648.5 M645.4,120.3 L648.6,123.5 L645.4,126.7" fill="none" stroke="#1e88d8" stroke-width="1.2"/></svg>
<svg class="a" style="left:0px;top:0px;" width="860" height="110" viewBox="0 0 860 110"><rect x="698.6" y="76.8" width="26.6" height="20.3" fill="#fff" stroke="#262626" stroke-width="1.1"/>
<path d="M698.6,83.6 H725.2 M698.6,90.6 H725.2 M720.5,76.8 V97.1" stroke="#262626" stroke-width="1" fill="none"/>
<rect x="703.3" y="76.8" width="12.6" height="6.8" fill="#f4a0a8" stroke="#e0303f" stroke-width="1"/>
<rect x="711.7" y="83.6" width="8.8" height="7" fill="#fff"/>
<rect x="703.3" y="83.6" width="8.4" height="7" fill="#8dc3ee" stroke="#1e88d8" stroke-width="1"/>
<rect x="703.3" y="90.6" width="14.3" height="6.5" fill="#f4a0a8" stroke="#e0303f" stroke-width="1"/></svg>
<div class="t" style="left:681.08px;top:107.67px;font-size:12.2px;color:#3b3a39;transform:scaleX(1.0185);transform-origin:0 0;">Conditional</div>
<div class="t" style="left:676.81px;top:123.47px;font-size:12.2px;color:#3b3a39;transform:scaleX(1.0151);transform-origin:0 0;">Formatting</div>
<svg class="a" style="left:740px;top:128.5px;" width="6.5" height="5" viewBox="0 0 6.5 5"><path d="M0.5,0.8 l2.75,2.45 l2.75,-2.45" fill="none" stroke="#444" stroke-width="1.1"/></svg>
<svg class="a" style="left:0px;top:0px;" width="860" height="110" viewBox="0 0 860 110"><rect x="764.6" y="76.8" width="27.2" height="20.3" fill="#fff" stroke="#262626" stroke-width="1.1"/>
<path d="M764.6,83.6 H791.8 M764.6,90.6 H791.8 M773.8,76.8 V97.1 M782.7,76.8 V97.1" stroke="#262626" stroke-width="1" fill="none"/>
<rect x="773.8" y="83.6" width="18" height="13.5" fill="#8dc3ee" stroke="#1e88d8" stroke-width="1.1"/>
<path d="M773.8,90.6 H791.8 M782.7,83.6 V97.1" stroke="#1e88d8" stroke-width="1"/><path d="M793.5,84 L781,95.5" stroke="#3b3a39" stroke-width="3.4" stroke-linecap="round"/><path d="M793.5,84 L781,95.5" stroke="#fff" stroke-width="1.6" stroke-linecap="round"/><path d="M781.5,94.5 C777.5,93.5 775.5,96.5 774.5,99.5 C774.0,101.5 772.5,102.5 770.5,103.0 C775.5,104.5 781.5,103.5 783.0,99.5 C783.5,97.5 783.0,95.5 781.5,94.5 Z" fill="#1e88d8"/></svg>
<svg class="a" style="left:0px;top:0px;" width="860" height="110" viewBox="0 0 860 110"><rect x="816.6" y="76.8" width="27.2" height="20.3" fill="#fff" stroke="#262626" stroke-width="1.1"/>
<path d="M816.6,81.2 H843.8 M821.2,76.8 V97.1 M838.7,76.8 V81.2 M816.6,92.4 H821.2" stroke="#262626" stroke-width="1" fill="none"/>
<rect x="821.2" y="81.2" width="17.5" height="11.2" fill="#8dc3ee" stroke="#1e88d8" stroke-width="1.1"/><path d="M845.5,84 L833,95.5" stroke="#3b3a39" stroke-width="3.4" stroke-linecap="round"/><path d="M845.5,84 L833,95.5" stroke="#fff" stroke-width="1.6" stroke-linecap="round"/><path d="M833.5,94.5 C829.5,93.5 827.5,96.5 826.5,99.5 C826.0,101.5 824.5,102.5 822.5,103.0 C827.5,104.5 833.5,103.5 835.0,99.5 C835.5,97.5 835.0,95.5 833.5,94.5 Z" fill="#1e88d8"/></svg>
<div class="t" style="left:751.57px;top:107.67px;font-size:12.2px;color:#3b3a39;transform:scaleX(0.9552);transform-origin:0 0;">Format as</div>
<div class="t" style="left:759.58px;top:123.47px;font-size:12.2px;color:#3b3a39;transform:scaleX(0.9166);transform-origin:0 0;">Table</div>
<svg class="a" style="left:790px;top:128.5px;" width="6.5" height="5" viewBox="0 0 6.5 5"><path d="M0.5,0.8 l2.75,2.45 l2.75,-2.45" fill="none" stroke="#444" stroke-width="1.1"/></svg>
<div class="t" style="left:819.6px;top:107.67px;font-size:12.2px;color:#3b3a39;transform:scaleX(0.9856);transform-origin:0 0;">Cell</div>
<div class="t" style="left:808.7px;top:123.47px;font-size:12.2px;color:#3b3a39;transform:scaleX(0.9111);transform-origin:0 0;">Styles</div>
<svg class="a" style="left:843px;top:128.5px;" width="6.5" height="5" viewBox="0 0 6.5 5"><path d="M0.5,0.8 l2.75,2.45 l2.75,-2.45" fill="none" stroke="#444" stroke-width="1.1"/></svg>
<svg class="a" style="left:0px;top:0px;" width="1000" height="140" viewBox="0 0 1000 140"><rect x="872.5" y="72.6" width="15" height="12.6" fill="#fff" stroke="#3b3a39" stroke-width="1.1"/>
<path d="M872.5,76.8 H887.5 M872.5,81 H887.5 M877.5,72.6 V85.2 M882.5,72.6 V85.2" stroke="#3b3a39" stroke-width="1" fill="none"/>
<rect x="877.5" y="76.8" width="10" height="4.2" fill="#8dc3ee" stroke="#1e88d8" stroke-width="1.1"/>
<rect x="872" y="76" width="5" height="6" fill="#f3f2f1"/>
<path d="M880,79 H873 M875.8,76.2 L873,79 L875.8,81.8" fill="none" stroke="#1e88d8" stroke-width="1.3"/>
<rect x="872.5" y="95.6" width="15" height="12.6" fill="#fff" stroke="#3b3a39" stroke-width="1.1"/>
<path d="M872.5,99.8 H887.5 M872.5,104 H887.5 M877.5,95.6 V108.2 M882.5,95.6 V108.2" stroke="#3b3a39" stroke-width="1" fill="none"/>
<rect x="872" y="99" width="4" height="5.5" fill="#f3f2f1"/><rect x="881.5" y="99" width="7" height="5.5" fill="#f3f2f1"/>
<rect x="877.5" y="99.2" width="5" height="5.2" fill="#8dc3ee" stroke="#1e88d8" stroke-width="1.1"/>
<path d="M872.5,101.8 H877.5" stroke="#1e88d8" stroke-width="1.1"/>
<path d="M883.5,99.3 L888,104 M888,99.3 L883.5,104" stroke="#e8453c" stroke-width="1.2"/>
<rect x="872.5" y="119.6" width="15" height="12.6" fill="#fff" stroke="#3b3a39" stroke-width="1.1"/>
<path d="M872.5,123.4 H887.5 M872.5,128.4 H887.5 M876,119.6 V132.2 M884,119.6 V132.2" stroke="#3b3a39" stroke-width="1" fill="none"/>
<rect x="876" y="123.4" width="8" height="5" fill="#8dc3ee" stroke="#1e88d8" stroke-width="1.1"/>
<path d="M875.5,117.8 H884.5 M875.5,116.5 V119 M884.5,116.5 V119" stroke="#1e88d8" stroke-width="1"/>
<path d="M980,74.5 V72.6 H968.6 L974.8,79 L968.6,85.3 H980 V83.4" fill="none" stroke="#3b3a39" stroke-width="1.1"/>
<rect x="966.6" y="95.6" width="15.2" height="12.8" fill="#fff" stroke="#3b3a39" stroke-width="1.1"/>
<path d="M966.6,98 H981.8" stroke="#3b3a39" stroke-width="1"/>
<path d="M974.2,100 V106 M971.6,103.5 L974.2,106.1 L976.8,103.5" fill="none" stroke="#1e88d8" stroke-width="1.2"/>
<path d="M967,127 L975.5,118.5 L981,124 L972.5,132.5 Z" fill="#fff" stroke="#b146c2" stroke-width="1.2"/>
<path d="M967,127 L971,123 L976.5,128.5 L972.5,132.5 Z" fill="#d49adf" stroke="#b146c2" stroke-width="1.2"/></svg>
<div class="t" style="left:890.13px;top:73.67px;font-size:12.2px;color:#3b3a39;transform:scaleX(0.9747);transform-origin:0 0;">Insert</div>
<svg class="a" style="left:931px;top:77.5px;" width="6.5" height="5" viewBox="0 0 6.5 5"><path d="M0.5,0.8 l2.75,2.45 l2.75,-2.45" fill="none" stroke="#444" stroke-width="1.1"/></svg>
<div class="t" style="left:890.25px;top:96.67px;font-size:12.2px;color:#3b3a39;transform:scaleX(0.9783);transform-origin:0 0;">Delete</div>
<svg class="a" style="left:934.5px;top:100.5px;" width="6.5" height="5" viewBox="0 0 6.5 5"><path d="M0.5,0.8 l2.75,2.45 l2.75,-2.45" fill="none" stroke="#444" stroke-width="1.1"/></svg>
<div class="t" style="left:890.22px;top:119.67px;font-size:12.2px;color:#3b3a39;transform:scaleX(1.006);transform-origin:0 0;">Format</div>
<svg class="a" style="left:933px;top:123.5px;" width="6.5" height="5" viewBox="0 0 6.5 5"><path d="M0.5,0.8 l2.75,2.45 l2.75,-2.45" fill="none" stroke="#444" stroke-width="1.1"/></svg>
<svg class="a" style="left:988.7px;top:77.5px;" width="6.5" height="5" viewBox="0 0 6.5 5"><path d="M0.5,0.8 l2.75,2.45 l2.75,-2.45" fill="none" stroke="#444" stroke-width="1.1"/></svg>
<svg class="a" style="left:986.7px;top:100.5px;" width="6.5" height="5" viewBox="0 0 6.5 5"><path d="M0.5,0.8 l2.75,2.45 l2.75,-2.45" fill="none" stroke="#444" stroke-width="1.1"/></svg>
<svg class="a" style="left:986.7px;top:123.5px;" width="6.5" height="5" viewBox="0 0 6.5 5"><path d="M0.5,0.8 l2.75,2.45 l2.75,-2.45" fill="none" stroke="#444" stroke-width="1.1"/></svg>
<div class="a" style="left:1001px;top:68px;width:42px;height:72px;background:#c8c6c4;border:1px solid #a19f9d"></div>
<svg class="a" style="left:1000px;top:60px;" width="40" height="45" viewBox="0 0 40 45"><path d="M8.6,25.5 L12.8,14.9 L17,25.5 M10.2,22 H15.4" fill="none" stroke="#1e88d8" stroke-width="1.3"/><path d="M8.8,28.9 H16.8 L8.6,38.6 H17.2" fill="none" stroke="#3b3a39" stroke-width="1.3"/></svg>
<svg class="a" style="left:0px;top:0px;" width="1142" height="140" viewBox="0 0 1142 140"><path d="M1020.6,80.9 H1035.6 V83 L1029.7,89.4 V95.3 H1026.5 V89.4 L1020.6,83 Z" fill="#fff" stroke="#3b3a39" stroke-width="1.1" stroke-linejoin="round"/></svg>
<div class="t" style="left:1004.64px;top:107.67px;font-size:12.2px;color:#3b3a39;transform:scaleX(1.0114);transform-origin:0 0;">Sort &amp;</div>
<div class="t" style="left:1002.74px;top:123.47px;font-size:12.2px;color:#3b3a39;transform:scaleX(0.9836);transform-origin:0 0;">Filter</div>
<svg class="a" style="left:1034px;top:128.5px;" width="6.5" height="5" viewBox="0 0 6.5 5"><path d="M0.5,0.8 l2.75,2.45 l2.75,-2.45" fill="none" stroke="#444" stroke-width="1.1"/></svg>
<svg class="a" style="left:1050px;top:72px;" width="32" height="32" viewBox="0 0 32 32"><circle cx="19.5" cy="11" r="10" fill="#fff" stroke="#444" stroke-width="1.2"/><path d="M12.5,18 L1,30" stroke="#444" stroke-width="1.2"/></svg>
<div class="t" style="left:1047.59px;top:107.67px;font-size:12.2px;color:#3b3a39;transform:scaleX(1.0323);transform-origin:0 0;">Find &amp;</div>
<div class="t" style="left:1044.69px;top:123.47px;font-size:12.2px;color:#3b3a39;transform:scaleX(0.9204);transform-origin:0 0;">Select</div>
<svg class="a" style="left:1081px;top:128.5px;" width="6.5" height="5" viewBox="0 0 6.5 5"><path d="M0.5,0.8 l2.75,2.45 l2.75,-2.45" fill="none" stroke="#444" stroke-width="1.1"/></svg>
<div class="a" style="left:6px;top:172px;width:102px;height:26px;background:#fff;border:1px solid #c8c6c4"></div>
<div class="t" style="left:13.2px;top:179.84px;font-size:12px;color:#262626;transform:scaleX(1.1135);transform-origin:0 0;">A1</div>
<svg class="a" style="left:94px;top:182px;" width="8" height="5" viewBox="0 0 8 5"><path d="M0,0 h7.5 l-3.75,4 z" fill="#605e5c"/></svg>
<div class="a" style="left:122px;top:180px;width:2px;height:2px;background:#a19f9d"></div>
<div class="a" style="left:122px;top:184px;width:2px;height:2px;background:#a19f9d"></div>
<div class="a" style="left:122px;top:188px;width:2px;height:2px;background:#a19f9d"></div>
<div class="a" style="left:138px;top:172px;width:110px;height:26px;background:#fff;border:1px solid #c8c6c4"></div>
<svg class="a" style="left:0px;top:160px;" width="300" height="40" viewBox="0 0 300 40"><path d="M151.5,19.6 L161.8,29.9 M161.8,19.6 L151.5,29.9" stroke="#c8c6c4" stroke-width="1.3"/>
<path d="M187.6,25 L191.6,29.5 L199.8,20.5" fill="none" stroke="#c8c6c4" stroke-width="2"/>
<path d="M232,19.6 C230.5,18.2 228.6,18.8 228,21.2 L226,28.8 C225.5,30.6 224.5,31 223.4,30.4" fill="none" stroke="#605e5c" stroke-width="1.6"/>
<path d="M225.6,23.6 H230.6" stroke="#605e5c" stroke-width="1.1"/>
<path d="M227.8,24.2 C229.5,23.6 230.5,24.5 231,26.5 L232,29 C232.4,29.6 233.5,29.6 234.6,28.6 M234.4,24.4 C233,24.2 232,25.5 231.2,26.6 L229.4,28.6 C228.8,29.3 228,29.3 227.4,28.8" fill="none" stroke="#605e5c" stroke-width="1.5"/></svg>
<div class="a" style="left:251px;top:172px;width:900px;height:26px;background:#fff;border:1px solid #c8c6c4"></div>
<div class="t" style="left:262.22px;top:179.84px;font-size:12px;color:#262626;transform:scaleX(1.2255);transform-origin:0 0;">Male</div>
<div class="a" style="left:1px;top:678px;width:1139px;height:27px;background:#e6e6e6"></div>
<svg class="a" style="left:27px;top:686px;" width="6" height="9" viewBox="0 0 6 9"><path d="M5,0.5 L0.5,4.5 L5,8.5 z" fill="#c8c6c4"/></svg>
<svg class="a" style="left:56px;top:686px;" width="6" height="9" viewBox="0 0 6 9"><path d="M0.5,0.5 L5,4.5 L0.5,8.5 z" fill="#c8c6c4"/></svg>
<div class="a" style="left:101px;top:677px;width:65px;height:25px;background:#fff;border-left:1px solid #a6a6a6;border-right:1px solid #a6a6a6"></div>
<div class="a" style="left:101px;top:700px;width:65px;height:2px;background:#217346"></div>
<div class="t" style="left:112.62px;top:684.72px;font-size:12.5px;color:#217346;font-weight:bold;transform:scaleX(1.0022);transform-origin:0 0;">Sheet1</div>
<svg class="a" style="left:198px;top:684px;" width="18" height="17" viewBox="0 0 18 17"><circle cx="8.5" cy="8" r="7.5" fill="none" stroke="#605e5c" stroke-width="1.2"/><path d="M8.5,4 v8 M4.5,8 h8" stroke="#605e5c" stroke-width="1.4"/></svg>
<div class="a" style="left:685px;top:686px;width:2px;height:2px;background:#a6a6a6"></div>
<div class="a" style="left:685px;top:690px;width:2px;height:2px;background:#a6a6a6"></div>
<div class="a" style="left:685px;top:694px;width:2px;height:2px;background:#a6a6a6"></div>
<div class="a" style="left:702px;top:685px;width:418px;height:13px;background:#dadada"></div>
<div class="a" style="left:716px;top:684px;width:292px;height:15px;background:#fff;border:1px solid #767676"></div>
<div class="a" style="left:702px;top:684px;width:15px;height:15px;background:#fff;border:1px solid #767676"></div>
<svg class="a" style="left:706px;top:687px;" width="6" height="9" viewBox="0 0 6 9"><path d="M5,0.5 L0.5,4.5 L5,8.5 z" fill="#605e5c"/></svg>
<div class="a" style="left:1105px;top:684px;width:15px;height:15px;background:#fff;border:1px solid #767676"></div>
<svg class="a" style="left:1110px;top:687px;" width="6" height="9" viewBox="0 0 6 9"><path d="M0.5,0.5 L5,4.5 L0.5,8.5 z" fill="#605e5c"/></svg>
<div class="a" style="left:1120px;top:208px;width:20px;height:470px;background:#e6e6e6"></div>
<div class="a" style="left:1123px;top:250px;width:15px;height:427px;background:#dadada"></div>
<div class="a" style="left:1123px;top:260px;width:15px;height:162px;background:#fff;border:1px solid #767676"></div>
<div class="a" style="left:1123px;top:663px;width:15px;height:15px;background:#fff;border:1px solid #767676"></div>
<svg class="a" style="left:1126px;top:669px;" width="10" height="6" viewBox="0 0 10 6"><path d="M0.5,0.5 L9,0.5 L4.75,5 z" fill="#605e5c"/></svg>
<div class="a" style="left:1px;top:705px;width:1139px;height:1px;background:#d2d0ce"></div>
<div class="a" style="left:1px;top:706px;width:1139px;height:21px;background:#f3f2f1"></div>
<div class="t" style="left:8.63px;top:710.77px;font-size:11.5px;color:#444;transform:scaleX(0.9438);transform-origin:0 0;">Ready</div>
<div class="t" style="left:54.94px;top:710.77px;font-size:11.5px;color:#444;transform:scaleX(1.0231);transform-origin:0 0;">Workbook Statistics</div>
<svg class="a" style="left:0px;top:690px;" width="220" height="38" viewBox="0 0 220 38"><g fill="none" stroke="#3b3a39" stroke-width="1.1" stroke-linecap="round"><circle cx="184" cy="21.2" r="1.5"/><path d="M182.4,22.3 C180.5,21.5 178.5,21.8 178.3,22.8 C178.2,23.8 179.5,24.3 181.2,24.4 V28.5 C180.5,30.5 180.4,32 180.6,32.4 H182"/><path d="M185.6,22.3 C187.5,21.5 189.6,21.7 189.8,22.6 C189.9,23.6 188.4,24.3 186.6,24.5 V27.2"/><path d="M184.4,29.3 L187.5,32.5 L192.6,27.2"/></g></svg>
<div class="t" style="left:195.0px;top:710.77px;font-size:11.5px;color:#444;transform:scaleX(1.0059);transform-origin:0 0;">Accessibility: Good to go</div>
<div class="a" style="left:830px;top:706px;width:40px;height:21px;background:#d2d0ce"></div>
<svg class="a" style="left:0px;top:690px;" width="1142" height="38" viewBox="0 0 1142 38"><g fill="none" stroke="#444" stroke-width="1.2">
<rect x="843.6" y="19.6" width="11.8" height="12"/>
<path d="M847.6,19.6 V31.6 M851.5,19.6 V31.6 M843.6,23.6 H855.4 M843.6,27.6 H855.4"/>
<rect x="883.6" y="19.6" width="12.8" height="12"/>
<rect x="886.6" y="22.4" width="6.8" height="6.8"/>
<path d="M888,24.2 H892 M888,25.9 H892 M888,27.6 H892" stroke-width="0.9"/>
<rect x="923.6" y="19.6" width="12.8" height="12"/>
<path d="M923.6,26.3 H932.8 V19.6 M926.8,19.6 V26.3"/>
</g></svg>
<div class="a" style="left:956px;top:715px;width:8px;height:1px;background:#444"></div>
<div class="a" style="left:969px;top:715px;width:100px;height:1px;background:#8a8886"></div>
<div class="a" style="left:1018px;top:712px;width:1px;height:7px;background:#8a8886"></div>
<div class="a" style="left:1036px;top:710px;width:5px;height:12px;background:#605e5c"></div>
<div class="a" style="left:1073px;top:715px;width:10px;height:1px;background:#444"></div>
<div class="a" style="left:1077.5px;top:710.5px;width:1px;height:10px;background:#444"></div>
<div class="t" style="left:1094.05px;top:710.77px;font-size:11.5px;color:#444;transform:scaleX(0.9521);transform-origin:0 0;">220%</div>
<div class="a" style="left:1001px;top:141px;width:139px;height:175px;background:#fff;border:1px solid #c8c6c4;box-shadow:0 2px 4px rgba(0,0,0,0.15)"></div>
<svg class="a" style="left:0px;top:0px;pointer-events:none" width="1142" height="728" viewBox="0 0 1142 728"><path d="M1015.4,154.6 L1018.3,148.2 L1021.2,154.6 M1016.4,152.6 H1020.2" fill="none" stroke="#1e88d8" stroke-width="1.6"/><path d="M1015.2,157.4 H1021 L1015.2,163.10000000000002 H1021.2" fill="none" stroke="#3b3a39" stroke-width="1.2"/><path d="M1027.3,148 V163.5 M1024,160 L1027.3,163.5 L1030.6,160" fill="none" stroke="#3b3a39" stroke-width="1.2"/></svg>
<div class="t" style="left:1039.45px;top:150.87px;font-size:12.2px;color:#262626;transform:scaleX(0.9989);transform-origin:0 0;"><u>S</u>ort A to Z</div>
<svg class="a" style="left:0px;top:0px;pointer-events:none" width="1142" height="728" viewBox="0 0 1142 728"><path d="M1015.2,176.6 H1021 L1015.2,182.3 H1021.2" fill="none" stroke="#3b3a39" stroke-width="1.2"/><path d="M1015.4,191.2 L1018.3,184.79999999999998 L1021.2,191.2 M1016.4,189.2 H1020.2" fill="none" stroke="#1e88d8" stroke-width="1.6"/><path d="M1027.3,176 V191.5 M1024,188 L1027.3,191.5 L1030.6,188" fill="none" stroke="#3b3a39" stroke-width="1.2"/></svg>
<div class="t" style="left:1039.46px;top:178.57px;font-size:12.2px;color:#262626;transform:scaleX(0.9819);transform-origin:0 0;">S<u>o</u>rt Z to A</div>
<svg class="a" style="left:1015px;top:204px;" width="17" height="17" viewBox="0 0 17 17"><rect x="0.5" y="0.5" width="15" height="15" fill="#fff" stroke="#444" stroke-width="1.1"/><path d="M0.5,3 h15" stroke="#444"/><path d="M5,6 v7 M3,11 l2,2 l2,-2" fill="none" stroke="#1e88d8" stroke-width="1.2"/><path d="M11,13 v-7 M9,8 l2,-2 l2,2" fill="none" stroke="#444" stroke-width="1.2"/></svg>
<div class="t" style="left:1039.71px;top:206.67px;font-size:12.2px;color:#262626;transform:scaleX(0.9731);transform-origin:0 0;">C<u>u</u>stom Sort...</div>
<div class="a" style="left:1002px;top:228px;width:139px;height:30px;background:#d2d0ce;border:3px solid #000;border-radius:4px"></div>
<svg class="a" style="left:0px;top:0px;" width="1142" height="320" viewBox="0 0 1142 320"><path d="M1015.6,235.8 H1030.4 V237.6 L1024.6,244 V250.2 H1021.4 V244 L1015.6,237.6 Z" fill="#fff" stroke="#3b3a39" stroke-width="1.1" stroke-linejoin="round"/></svg>
<div class="t" style="left:1039.34px;top:237.97px;font-size:12.2px;color:#262626;transform:scaleX(0.9797);transform-origin:0 0;"><u>F</u>ilter</div>
<svg class="a" style="left:0px;top:0px;" width="1142" height="320" viewBox="0 0 1142 320"><path d="M1021.4,278.4 V272 L1015.6,265.6 V263.8 H1030.4 V265.6 L1025.6,270.6" fill="#f0f0f0" stroke="#c8c6c4" stroke-width="1.1"/><path d="M1024.8,273.2 L1030.4,278.8 M1030.4,273.2 L1024.8,278.8" stroke="#c8c6c4" stroke-width="1.1"/></svg>
<div class="t" style="left:1039.74px;top:265.97px;font-size:12.2px;color:#b3b0ad;transform:scaleX(0.9221);transform-origin:0 0;"><u>C</u>lear</div>
<svg class="a" style="left:0px;top:0px;" width="1142" height="320" viewBox="0 0 1142 320"><path d="M1021.4,306.4 V300 L1015.6,293.6 V291.8 H1030.4 V293.6 L1025.6,298.6" fill="#f0f0f0" stroke="#c8c6c4" stroke-width="1.1"/><path d="M1023.6,301.8 A3.6,3.6 0 0 1 1030,300.6 M1030.4,304.6 A3.6,3.6 0 0 1 1024,305.8 M1030.6,298.8 V301.2 H1028.2 M1023.4,307.6 V305.2 H1025.8" fill="none" stroke="#c8c6c4" stroke-width="1.1"/></svg>
<div class="t" style="left:1039.38px;top:293.87px;font-size:12.2px;color:#b3b0ad;transform:scaleX(0.9407);transform-origin:0 0;">Reappl<u>y</u></div>
<svg class="a" style="left:1132px;top:251px;" width="11" height="19" viewBox="0 0 11 19"><path d="M1,1 v15 l3.5,-3.5 l2.5,5.5 l2,-1 l-2.5,-5.5 h5 z" fill="#fff" stroke="#000" stroke-width="1"/></svg>
<svg class="a" style="left:600px;top:120px;" width="542" height="480" viewBox="0 0 542 480"><g stroke="#000" stroke-width="3.3" fill="none" stroke-linecap="butt">
<path d="M202,238.5 L394,26.5"/>
<path d="M304.5,449 L400.3,147.5"/>
</g>
<path d="M402.5,16.5 L386.3,25.8 L392.5,27.6 L395.3,33.5 z" fill="#000"/>
<path d="M404,137.2 L393.6,150.6 L399.6,149.6 L404.6,154 z" fill="#000"/></svg>
<div class="t" style="left:628.2px;top:354.17px;font-size:28.5px;color:#000;font-weight:bold;transform:scaleX(1.0557);transform-origin:0 0;">Sort &amp; Filter</div>
<div class="t" style="left:828.39px;top:564.17px;font-size:28.5px;color:#000;font-weight:bold;transform:scaleX(1.086);transform-origin:0 0;">Filter</div>
<div class="a" style="left:0px;top:35px;width:1px;height:693px;background:#217346"></div>
<div class="a" style="left:1141px;top:35px;width:1px;height:693px;background:#217346"></div>
<div class="a" style="left:0px;top:727px;width:1142px;height:1px;background:#217346"></div>
</body></html>
